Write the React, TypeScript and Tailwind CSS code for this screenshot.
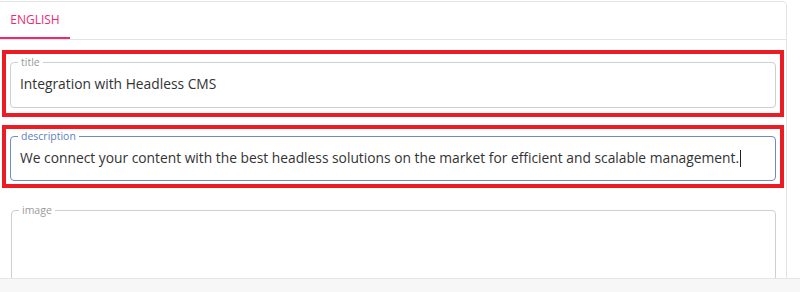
import React from "react";

function Field({
  label,
  value,
  focused,
  cursor,
  h,
}: {
  label: string;
  value: string;
  focused?: boolean;
  cursor?: boolean;
  h: string;
}) {
  return (
    <fieldset
      className={
        h +
        " rounded-[4px] border pl-0 pr-[10px] " +
        (focused ? "border-[#6e8cc2]" : "border-[#cfcfcf]")
      }
    >
      <legend
        className={
          "ml-[7px] px-[3px] text-[10.5px] leading-[10px] " +
          (focused ? "text-[#5f80bd]" : "text-[#9a9a9a]")
        }
      >
        {label}
      </legend>
      <div className="mt-[7px] flex items-center pl-[9px] text-[13.8px] leading-[20px] text-[#333333]">
        <span className="whitespace-nowrap">{value}</span>
        {cursor && <span className="ml-[1px] inline-block h-[17px] w-[1px] bg-[#222]" />}
      </div>
    </fieldset>
  );
}

export default function App() {
  return (
    <div
      className="relative h-[292px] w-[800px] overflow-hidden bg-white"
      style={{ fontFamily: '"Open Sans", "Liberation Sans", sans-serif' }}
    >
      <div className="mt-[1px] h-[277px] w-[787px] rounded-tr-[5px] border-r border-t border-[#e3e3e3]">
        <div className="flex h-[38px] border-b border-[#e3e3e3]">
          <div className="flex w-[70px] items-center justify-center border-b-2 border-[#ec2a73] text-[12px] font-medium text-[#ec2a73]">
            ENGLISH
          </div>
        </div>
        <div className="pl-[2px] pr-[2px] pt-[10px]">
          <div className="w-[782px] border-4 border-[#ec1c24] px-[4px] pb-[5px] pt-[3px]">
            <Field h="h-[51px]" label="title" value="Integration with Headless CMS" />
          </div>
          <div className="mt-[8px] w-[782px] border-4 border-[#ec1c24] px-[4px] pb-[3px] pt-[2px]">
            <Field
              h="h-[50px]"
              label="description"
              value="We connect your content with the best headless solutions on the market for efficient and scalable management."
              focused
              cursor
            />
          </div>
          <fieldset className="ml-[9px] mt-[17px] h-[90px] w-[765px] rounded-[4px] border border-[#cfcfcf]">
            <legend className="ml-[7px] px-[3px] text-[10.5px] leading-[10px] text-[#9a9a9a]">image</legend>
          </fieldset>
        </div>
      </div>
      <div className="h-[14px] w-full border-t border-[#e6e6e6] bg-[#f7f7f7]" />
    </div>
  );
}
